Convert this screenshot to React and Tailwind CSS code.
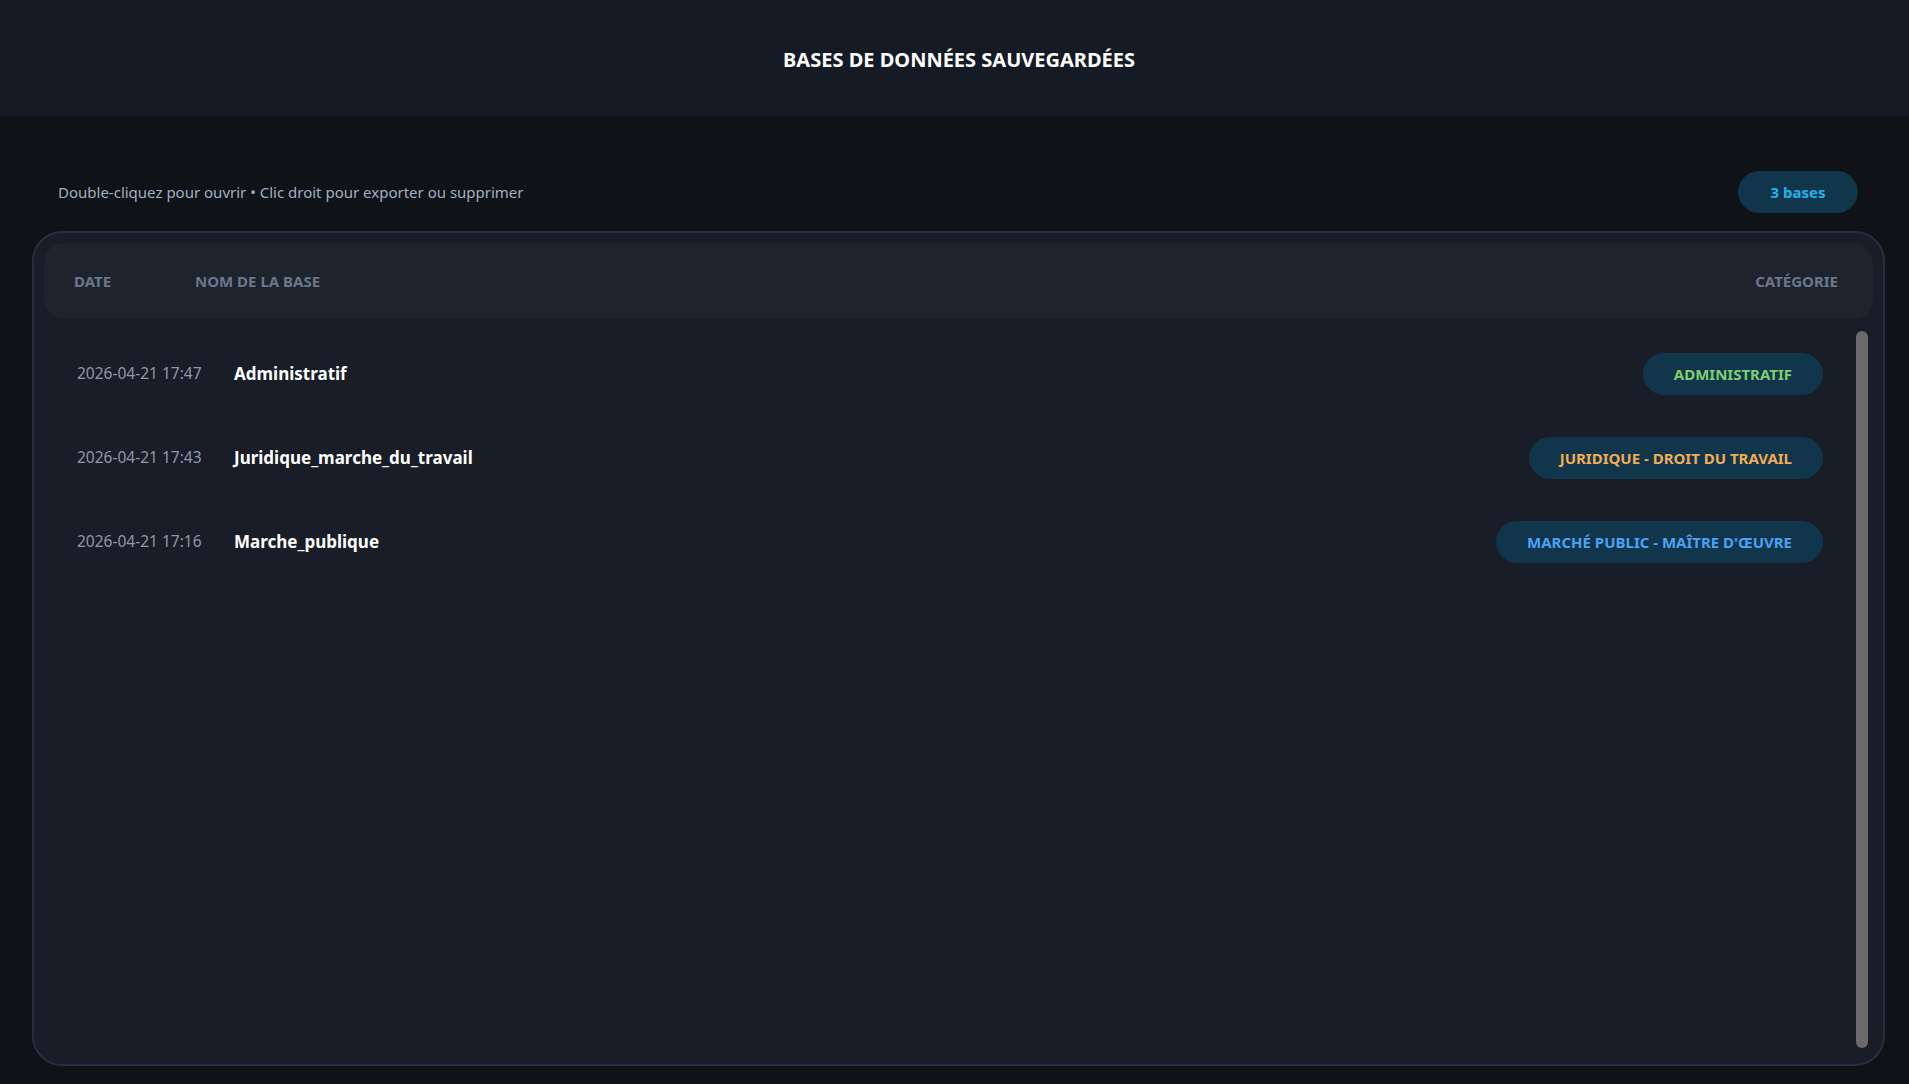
import { useState } from 'react';

const bases = [
  { date: '2026-04-21 17:47', name: 'Administratif', category: 'ADMINISTRATIF', tone: 'text-[#7fcf6e]' },
  { date: '2026-04-21 17:43', name: 'Juridique_marche_du_travail', category: 'JURIDIQUE - DROIT DU TRAVAIL', tone: 'text-[#f0ad56]' },
  { date: '2026-04-21 17:16', name: 'Marche_publique', category: "MARCHÉ PUBLIC - MAÎTRE D'ŒUVRE", tone: 'text-[#4aa3f5]' },
];

const font = { fontFamily: '"Noto Sans", "Open Sans", sans-serif' };

const BaseRow = ({ base, selected, onSelect }) => (
  <div
    className={`flex items-center h-[84px] pt-[2px] cursor-default ${selected ? 'bg-white/[0.02]' : ''}`}
    onClick={onSelect}
  >
    <span className="w-[157px] shrink-0 text-[15.5px] text-[#8d99a8]">{base.date}</span>
    <span className="flex-1 text-[17px] font-bold text-white">{base.name}</span>
    <span className={`h-[42px] px-[31px] flex items-center rounded-full bg-[#11354a] text-[15px] font-bold ${base.tone}`}>
      {base.category}
    </span>
  </div>
);

export default function App() {
  const [selected, setSelected] = useState(null);

  return (
    <div className="h-[1084px] flex flex-col bg-[#0f1217] overflow-hidden" style={font}>
      <header className="h-[116px] shrink-0 bg-[#151b24] flex items-center justify-center">
        <h1 className="text-[20px] font-bold text-white mt-[4px] ml-[9px]">BASES DE DONNÉES SAUVEGARDÉES</h1>
      </header>

      <main className="flex-1 min-h-0 flex flex-col pt-[55px] pb-[18px] pl-[32px] pr-[24px]">
        <div className="flex items-center justify-between px-[26px] pr-[27px] mb-[18px]">
          <p className="text-[15px] text-[#a3b0c2]">Double-cliquez pour ouvrir • Clic droit pour exporter ou supprimer</p>
          <span className="h-[42px] w-[120px] flex items-center justify-center rounded-full bg-[#11354a] text-[15px] font-bold text-[#1cb6ee]">
            3 bases
          </span>
        </div>

        <section className="flex-1 min-h-0 flex flex-col rounded-[30px] border-2 border-[#262f41] bg-[#181d27]">
          <div className="m-[10px] mb-0 h-[76px] shrink-0 flex items-center rounded-[20px] bg-[#1e232e] pl-[30px] pr-[35px] text-[15px] font-bold text-[#6b788c]">
            <span className="w-[121px]">DATE</span>
            <span className="flex-1">NOM DE LA BASE</span>
            <span>CATÉGORIE</span>
          </div>

          <div className="flex-1 min-h-0 flex gap-[33px] pl-[43px] pr-[15px] pt-[12px] pb-[16px]">
            <div className="flex-1 flex flex-col">
              {bases.map((b, i) => (
                <BaseRow key={b.name} base={b} selected={selected === i} onSelect={() => setSelected(i)} />
              ))}
            </div>
            <div className="w-[12px] shrink-0 rounded-full bg-[#6b6b6b]" />
          </div>
        </section>
      </main>
    </div>
  );
}
